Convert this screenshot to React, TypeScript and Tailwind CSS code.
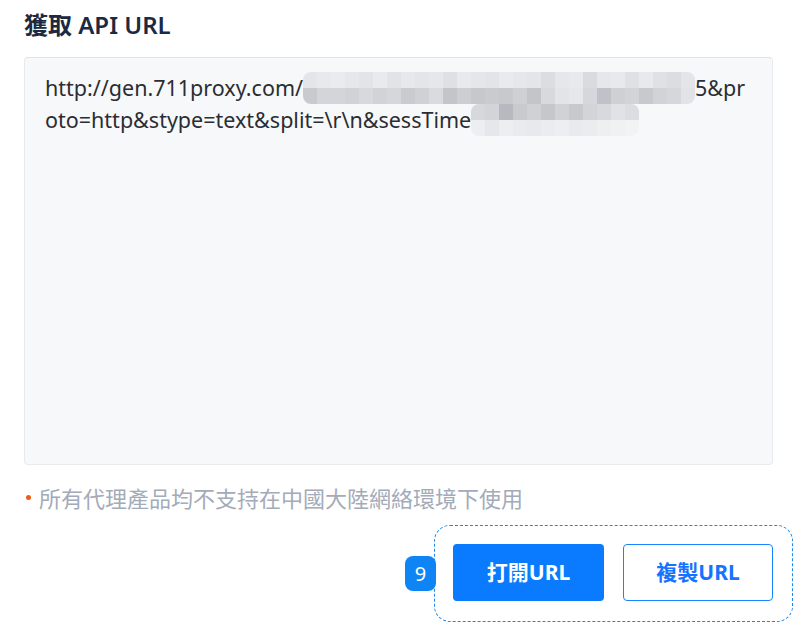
import React from 'react';

const blurLine1 = [
  ['#e4e5e8', '#e8e9ec', '#eaebee', '#e6e7ea', '#e3e4e7', '#e9eaed', '#e2e3e6', '#e7e8eb', '#e4e5e8', '#e6e7ea', '#dfe0e3', '#e8e9ec', '#e5e6e9', '#e3e4e7', '#e9eaed', '#e6e7ea', '#e4e5e8', '#dcdde0', '#e6e7ea', '#e8e9ec', '#dadbde', '#e6e7ea', '#e8e9ec', '#dfe0e3', '#e8e9ec', '#e0e1e4', '#dcdde0', '#e4e5e8'],
  ['#c9cacd', '#d2d5da', '#d4d5d8', '#cfd2d6', '#d8d9dc', '#d2d3d6', '#d6d7da', '#c8cbd0', '#d0d1d4', '#dadbde', '#c4c5c8', '#cdced1', '#c7c8cb', '#c9cbd0', '#c8c9cc', '#cfd0d3', '#c4c5c8', '#d8d9dc', '#e3e4e7', '#e6e7ea', '#d6d7da', '#bfc3c9', '#cfd0d3', '#d3d4d7', '#c8c9cc', '#d2d3d6', '#d6d7da', '#e2e3e6'],
];

const blurLine2 = [
  ['#d7d8db', '#d3d4d7', '#b6b9bf', '#c9cacd', '#d0d1d4', '#c6c7ca', '#cfd2d6', '#c8c9cc', '#d3d4d7', '#d8d9dc', '#e1e2e5', '#dcdde0'],
  ['#eceef1', '#e6e7ea', '#edeef0', '#eaebee', '#e8e9ec', '#ebecef', '#edeef1', '#e9eaed', '#ebecee', '#eeeff1', '#f0f1f3', '#f2f3f5'],
];

function Pixelated({ rows }: { rows: string[][] }) {
  return (
    <span className="inline-flex flex-col align-middle overflow-hidden rounded-[8px] -my-[6px]">
      {rows.map((row, i) => (
        <span key={i} className="flex">
          {row.map((c, j) => (
            <span key={j} className="block w-[14px] h-[16px]" style={{ background: c }} />
          ))}
        </span>
      ))}
    </span>
  );
}

export default function App() {
  return (
    <div
      className="w-[807px] h-[643px] bg-white overflow-hidden pl-[24px] pt-[7px]"
      style={{ fontFamily: '"Noto Sans", "Noto Sans CJK TC", sans-serif' }}
    >
      <div className="w-[749px]">
        {/* Title */}
        <h2 className="text-[24px] leading-[36px] font-semibold text-[#1b2a42]">獲取 API URL</h2>

        {/* URL box */}
        <div className="mt-[14px] h-[408px] bg-[#f7f8fa] border border-[#e8eaee] border-t-[#dfe2e7] rounded-[4px] pl-[20px] pr-[16px] pt-[14px]">
          <div className="text-[21.5px] leading-[32px] text-[#2a2d33] whitespace-nowrap">
            <div className="flex items-center">
              <span>http://gen.711proxy.com/</span>
              <Pixelated rows={blurLine1} />
              <span>5&amp;pr</span>
            </div>
            <div className="flex items-center">
              <span>oto=http&amp;stype=text&amp;split=\r\n&amp;sessTime</span>
              <Pixelated rows={blurLine2} />
            </div>
          </div>
        </div>

        {/* Note */}
        <div className="mt-[17px] flex items-center gap-[8px] text-[22px] leading-[30px] text-[#a3abb9]">
          <span className="w-[5px] h-[5px] rounded-full bg-[#f05a1a] ml-[2px]" />
          <span style={{ fontFamily: '"Noto Sans CJK TC", sans-serif' }}>所有代理產品均不支持在中國大陸網絡環境下使用</span>
        </div>

        {/* Actions */}
        <div className="mt-[32px] flex justify-end">
          <div className="relative flex gap-[19px]">
            <div className="absolute -left-[19px] -right-[20px] -top-[19px] -bottom-[21px] border-[1.5px] border-dashed border-[#1a86f0] rounded-[16px] pointer-events-none" />
            <div className="absolute -left-[48px] top-[12px] w-[31px] h-[35px] rounded-[8px] bg-[#0f84f5] text-white text-[20px] flex items-center justify-center">
              9
            </div>
            <button className="w-[151px] h-[57px] rounded-[4px] bg-[#0a7bff] text-white text-[21px] font-bold">
              打開URL
            </button>
            <button className="w-[150px] h-[57px] rounded-[4px] bg-white border-[1.5px] border-[#1683ff] text-[#1672ff] text-[21px] font-bold">
              複製URL
            </button>
          </div>
        </div>
      </div>
    </div>
  );
}
